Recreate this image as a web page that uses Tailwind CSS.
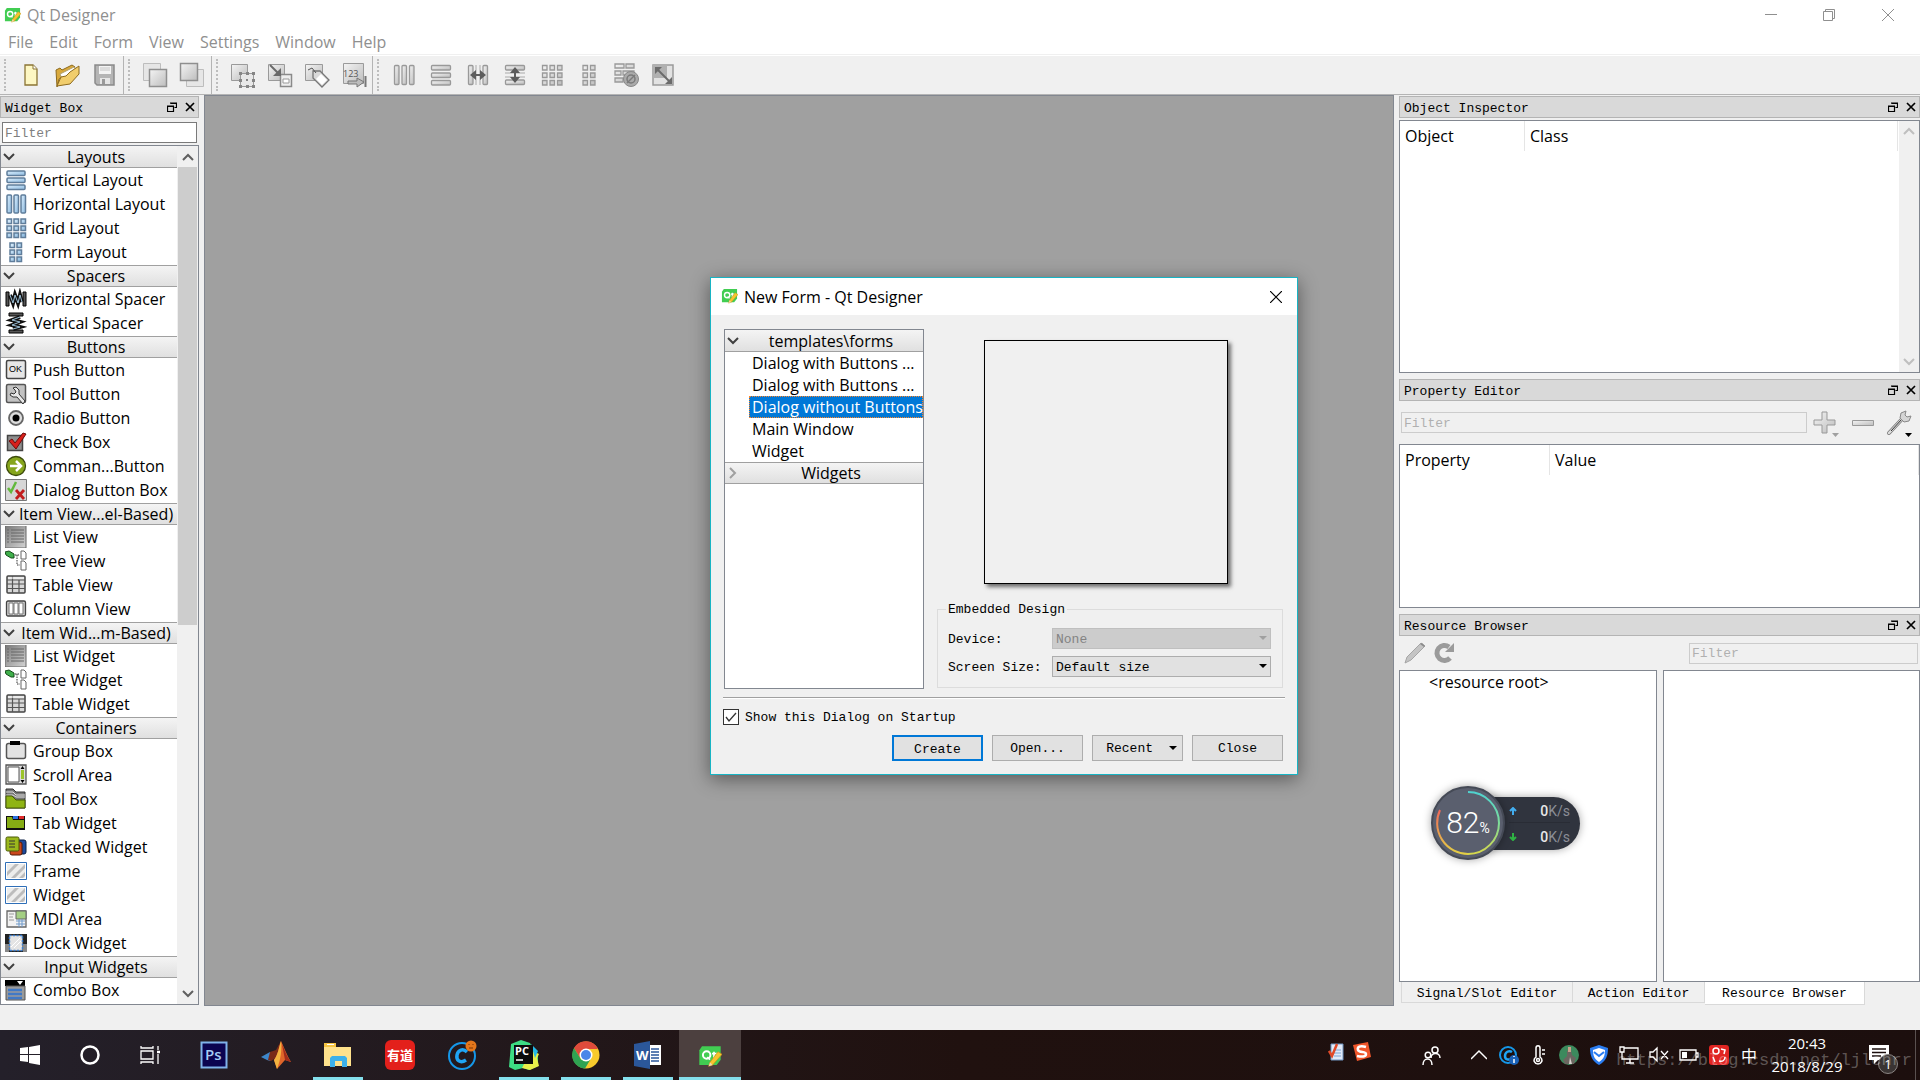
<!DOCTYPE html>
<html lang="en">
<head>
    <meta charset="UTF-8">
    <meta name="viewport" content="width=device-width, initial-scale=1.0">
    <title>Qt Designer</title>
    <!-- Tailwind CSS CDN -->
    <script src="https://cdn.jsdelivr.net/npm/@tailwindcss/browser@4"></script>
</head>
<body class="relative flex flex-col h-screen overflow-hidden bg-[#f0f0f0] text-black text-[16px] leading-[22px] font-['Open_Sans','Noto_Sans_CJK_SC',sans-serif]">

    <!-- Shared icons -->
    <svg width="0" height="0" class="absolute" aria-hidden="true">
        <defs>
            <linearGradient id="g-gray" x1="0" y1="0" x2="1" y2="1"><stop offset="0" stop-color="#f4f4f4"/><stop offset="1" stop-color="#bdbdbd"/></linearGradient>
            <linearGradient id="g-blue" x1="0" y1="0" x2="1" y2="1"><stop offset="0" stop-color="#d9ecfb"/><stop offset="1" stop-color="#8fbde2"/></linearGradient>
            <linearGradient id="g-dark" x1="0" y1="0" x2="1" y2="1"><stop offset="0" stop-color="#777"/><stop offset="1" stop-color="#d5d5d5"/></linearGradient>
            <linearGradient id="g-meter" x1="0" y1="0" x2="0" y2="1"><stop offset="0" stop-color="#4fd3d0"/><stop offset=".5" stop-color="#7ddc9a"/><stop offset="1" stop-color="#d8d84a"/></linearGradient>
            <linearGradient id="g-meter2" x1="0" y1="0" x2="0" y2="1"><stop offset="0" stop-color="#f0695a"/><stop offset="1" stop-color="#e3cf45"/></linearGradient>
        </defs>
        <symbol id="qt" viewBox="0 0 18 18">
            <path d="M3 1h14v10l-3 4H1V4z" fill="#41cd52"/>
            <circle cx="6.500" cy="7.500" r="2.800" fill="none" stroke="#fff" stroke-width="1.500"/>
            <path d="M7 9l2 2M12 5v5M10.500 6.500h4" stroke="#fff" stroke-width="1.300"/>
            <path d="M15 5l3 2-7 8-3 1 1-3z" fill="#f6c52e" stroke="#c88d14" stroke-width=".5"/>
            <path d="M8 16l1-3 2 2z" fill="#ecd9b0"/>
        </symbol>
        <symbol id="down" viewBox="0 0 12 12"><path d="M1 3l5 5 5-5" fill="none" stroke="currentColor" stroke-width="2"/></symbol>
        <symbol id="float" viewBox="0 0 10 10"><path d="M3.500 1.500h6v4h-2M3 1h7M.5 4.500h6v5h-6zM0 4h7" fill="none" stroke="#000" stroke-width="1.200"/></symbol>
        <symbol id="cross" viewBox="0 0 10 10"><path d="M1 1l8 8M9 1l-8 8" stroke="#000" stroke-width="1.700"/></symbol>
        <symbol id="w-rows" viewBox="0 0 22 22"><g fill="url(#g-blue)" stroke="#5f7d9b" stroke-width="1.500"><rect x="2" y="2" width="18" height="4.500" rx="1"/><rect x="2" y="9" width="18" height="4.500" rx="1"/><rect x="2" y="16" width="18" height="4.500" rx="1"/></g></symbol>
        <symbol id="w-cols" viewBox="0 0 22 22"><g fill="url(#g-blue)" stroke="#5f7d9b" stroke-width="1.500"><rect x="2" y="2" width="4.500" height="18" rx="1"/><rect x="9" y="2" width="4.500" height="18" rx="1"/><rect x="16" y="2" width="4.500" height="18" rx="1"/></g></symbol>
        <symbol id="w-grid" viewBox="0 0 22 22"><g fill="url(#g-blue)" stroke="#5f7d9b" stroke-width="1.500"><path d="M2 2h4.500v4.500H2zM9 2h4.500v4.500H9zM16 2h4.500v4.500H16zM2 9h4.500v4.500H2zM9 9h4.500v4.500H9zM16 9h4.500v4.500H16zM2 16h4.500v4.500H2zM9 16h4.500v4.500H9zM16 16h4.500v4.500H16z"/></g></symbol>
        <symbol id="w-form" viewBox="0 0 22 22"><g fill="url(#g-blue)" stroke="#5f7d9b" stroke-width="1.500"><path d="M5 2h4.500v4.500H5zM12 2h4.500v4.500H12zM5 9h4.500v4.500H5zM12 9h4.500v4.500H12zM5 16h4.500v4.500H5zM12 16h4.500v4.500H12z"/></g></symbol>
        <symbol id="w-spring" viewBox="0 0 22 22"><path d="M1 4h3v14H1zM18 4h3v14h-3z" fill="#555" stroke="#000"/><path d="M5 7l3 8 2-8 3 8 2-8 2 7" fill="none" stroke="#111" stroke-width="4"/><path d="M5 7l3 8 2-8 3 8 2-8 2 7" fill="none" stroke="#9cc0d8" stroke-width="1"/></symbol>
        <symbol id="w-list" viewBox="0 0 22 22"><path d="M0 0h21v22H0z" fill="url(#g-dark)"/><path d="M0 0v22M21 0v22H0" fill="none" stroke="#666"/><path d="M2 4h2M6 4h13M2 7h2M6 7h13M2 10h2M6 10h13M2 13h2M6 13h13M2 16h2M6 16h13" stroke="#666"/></symbol>
        <symbol id="w-tree" viewBox="0 0 22 22"><path d="M0 2l4-1 5 3v4H6L1 5z" fill="#3faf4b" stroke="#154d1b"/><path d="M10 5h5M12 5v10h3" fill="none" stroke="#333" stroke-dasharray="1.500 1"/><path d="M16 1h3l2 2v6h-5zM16 11h3l2 2v7h-5z" fill="#fff" stroke="#666"/></symbol>
        <symbol id="w-table" viewBox="0 0 22 22"><rect x="2" y="2" width="18" height="17" rx="1" fill="#d8d8d8" stroke="#444" stroke-width="1.500"/><path d="M2 6h18M2 10h18M2 14.500h18M7.500 2v17M14 6v13" stroke="#555" stroke-width="1.200"/><path d="M3 4h16" stroke="#fff"/></symbol>
        <symbol id="w-frame" viewBox="0 0 22 22"><path d="M.5 2.500h21v17H.5z" fill="#fff" stroke="#2f6fb8"/><path d="M2 4h18v14H2z" fill="#ededec"/><path d="M2 12l8-8h4L2 16zM6 18L20 4v4L10 18zM14 18l6-6v4l-2 2z" fill="#bcbcbc"/></symbol>
    </svg>

    <!-- Title bar -->
    <header class="flex items-center h-[30px] pl-1 pr-0.5 bg-white text-[#8f8f8f]">
        <svg class="size-[17px] mr-1.5"><use href="#qt"/></svg>
        <h1>Qt Designer</h1>
        <div class="ml-auto flex">
            <button class="flex justify-center items-center w-[58px] h-[28px]" aria-label="Minimize"><svg class="size-3" viewBox="0 0 12 12"><path d="M0 5.500h12" stroke="#8f8f8f"/></svg></button>
            <button class="flex justify-center items-center w-[58px] h-[28px]" aria-label="Restore"><svg class="size-3" viewBox="0 0 12 12" fill="none" stroke="#8f8f8f"><path d="M.5 2.500h9v9h-9zM2.500 2V.5h9v9H10"/></svg></button>
            <button class="flex justify-center items-center w-[60px] h-[28px]" aria-label="Close"><svg class="size-3" viewBox="0 0 12 12"><path d="M0 0l12 12M12 0L0 12" stroke="#8f8f8f"/></svg></button>
        </div>
    </header>

    <!-- Menu bar -->
    <nav class="h-[26px] bg-white">
        <div class="flex items-center gap-4 h-[25px] pl-2 border-b border-[#f0f0f0] text-[#8f8f8f]">
            <button>File</button>
            <button>Edit</button>
            <button>Form</button>
            <button>View</button>
            <button>Settings</button>
            <button>Window</button>
            <button>Help</button>
        </div>
    </nav>

    <!-- Tool bar -->
    <div class="flex h-[39px] border-b border-[#b4b4b4]">
        <div class="flex items-center pl-1 border-r border-[#b4b4b4]">
            <span class="w-0 h-8 mr-1.5 border-l-2 border-dotted border-[#bdbdbd]"></span>
            <button class="flex justify-center w-[37px]" aria-label="New"><svg class="size-[26px]" viewBox="0 0 26 26"><path d="M7 3h8l4 4v16H7z" fill="#fdf7c3" stroke="#8a7434" stroke-width="1.300"/><path d="M15 3v4h4" fill="#fff" stroke="#8a7434"/></svg></button>
            <button class="flex justify-center w-[37px]" aria-label="Open"><svg class="size-[26px]" viewBox="0 0 26 26"><path d="M1 8l4-2 2 2 10-5 3 2-3 5-13 7-2 8z" fill="#d9a93c" stroke="#8d6a1e"/><path d="M5 12L19 5l2 3-14 9z" fill="#fff" stroke="#b0a070"/><path d="M2 24l4-9 5-1 4-4 9-6v8l-9 10z" fill="#f1cd6c" stroke="#8d6a1e"/></svg></button>
            <button class="flex justify-center w-[37px]" aria-label="Save"><svg class="size-[26px]" viewBox="0 0 26 26"><path d="M3 3h19v20H5l-2-2z" fill="#b5b5b5" stroke="#8b8b8b" stroke-width="1.500"/><path d="M7 4h12v8H7z" fill="#f3f3f3"/><path d="M8 6h10M8 8h10" stroke="#c5c5c5"/><path d="M8 16h10v6H8z" fill="#e6e6e6"/><path d="M10 17h3v5h-3z" fill="#9a9a9a"/></svg></button>
        </div>
        <div class="flex items-center pl-1 pr-px border-r border-[#b4b4b4]">
            <span class="w-0 h-8 mr-1.5 border-l-2 border-dotted border-[#bdbdbd]"></span>
            <button class="flex justify-center w-[37px]" aria-label="Send to back"><svg class="size-[26px]" viewBox="0 0 26 26"><path d="M1.500 1.500h17v17h-17z" fill="#e6e6e6" stroke="#bdbdbd"/><path d="M7.500 7.500h17v17h-17z" fill="url(#g-gray)" stroke="#8f8f8f" stroke-width="1.500"/></svg></button>
            <button class="flex justify-center w-[37px]" aria-label="Bring to front"><svg class="size-[26px]" viewBox="0 0 26 26"><path d="M7.500 7.500h17v17h-17z" fill="#e6e6e6" stroke="#bdbdbd"/><path d="M1.500 1.500h17v17h-17z" fill="url(#g-gray)" stroke="#8f8f8f" stroke-width="1.500"/></svg></button>
        </div>
        <div class="flex items-center pl-1 border-r border-[#b4b4b4]">
            <span class="w-0 h-8 mr-1.5 border-l-2 border-dotted border-[#bdbdbd]"></span>
            <button class="flex justify-center w-[37px]" aria-label="Edit widgets"><svg class="size-[26px]" viewBox="0 0 26 26"><path d="M1.500 2.500h16v16h-16z" fill="url(#g-gray)" stroke="#9a9a9a"/><path d="M10.500 11.500h13v13h-13z" fill="#e8e8e8" stroke="#9a9a9a"/><path d="M9 10h3v3H9zM16 10h3v3h-3zM22 10h3v3h-3zM9 17h3v3H9zM22 17h3v3h-3zM9 23h3v3H9zM16 23h3v3h-3zM22 23h3v3h-3zM16 17h2v2h-2z" fill="#858585"/></svg></button>
            <button class="flex justify-center w-[37px]" aria-label="Edit signals and slots"><svg class="size-[26px]" viewBox="0 0 26 26"><path d="M1.500 2.500h16v16h-16z" fill="url(#g-gray)" stroke="#9a9a9a"/><path d="M13.500 12.500h11v12h-11z" fill="#eee" stroke="#8a8a8a" stroke-width="1.500"/><path d="M16 17h6v4h-6z" fill="#fff" stroke="#9a9a9a"/><path d="M3 3l9 9" stroke="#6a6a6a" stroke-width="2"/><path d="M14 6v8H6z" fill="#6a6a6a"/></svg></button>
            <button class="flex justify-center w-[37px]" aria-label="Edit buddies"><svg class="size-[26px]" viewBox="0 0 26 26"><path d="M1.500 2.500h17v16h-17z" fill="url(#g-gray)" stroke="#9a9a9a"/><path d="M9 9l7 0 9 9-7 7-9-9z" fill="#d9d9d9" stroke="#777" stroke-width="1.300"/><path d="M17 12l6 6-5 5-6-6z" fill="#fff"/><path d="M4 8l4-2 4 5" fill="none" stroke="#555"/></svg></button>
            <button class="flex justify-center w-[37px]" aria-label="Edit tab order"><svg class="size-[26px]" viewBox="0 0 26 26"><path d="M2.500 1.500h20v20h-20z" fill="url(#g-gray)" stroke="#9a9a9a"/><text x="2" y="15" font-size="9" fill="#555" font-family="Open Sans">123</text><path d="M7 19h9v-3l7 4-7 5v-3H7z" fill="#bcbcbc" stroke="#777"/><path d="M24.500 14v11" stroke="#777" stroke-width="2"/></svg></button>
        </div>
        <div class="flex items-center pl-1">
            <span class="w-0 h-8 mr-1.5 border-l-2 border-dotted border-[#bdbdbd]"></span>
            <button class="flex justify-center w-[37px]" aria-label="Lay out horizontally"><svg class="size-[22px]" viewBox="0 0 22 22" fill="url(#g-gray)" stroke="#999" stroke-width="1.300"><rect x="1.500" y="1.500" width="4.500" height="19" rx="1"/><rect x="9" y="1.500" width="4.500" height="19" rx="1"/><rect x="16.500" y="1.500" width="4.500" height="19" rx="1"/></svg></button>
            <button class="flex justify-center w-[37px]" aria-label="Lay out vertically"><svg class="size-[22px]" viewBox="0 0 22 22" fill="url(#g-gray)" stroke="#999" stroke-width="1.300"><rect x="1.500" y="1.500" width="19" height="4.500" rx="1"/><rect x="1.500" y="9" width="19" height="4.500" rx="1"/><rect x="1.500" y="16.500" width="19" height="4.500" rx="1"/></svg></button>
            <button class="flex justify-center w-[37px]" aria-label="Horizontal splitter"><svg class="size-[22px]" viewBox="0 0 22 22"><g fill="url(#g-gray)" stroke="#999" stroke-width="1.300"><rect x="1.500" y="1.500" width="4.500" height="19" rx="1"/><rect x="16" y="1.500" width="4.500" height="19" rx="1"/></g><path d="M9 1v20M13 1v20" stroke="#aaa"/><path d="M3 11l6-5v4h4V6l6 5-6 5v-4H9v4z" fill="#5c5c5c"/></svg></button>
            <button class="flex justify-center w-[37px]" aria-label="Vertical splitter"><svg class="size-[22px]" viewBox="0 0 22 22"><g fill="url(#g-gray)" stroke="#999" stroke-width="1.300"><rect x="1.500" y="1.500" width="19" height="4.500" rx="1"/><rect x="1.500" y="16" width="19" height="4.500" rx="1"/></g><path d="M1 9h20M1 13h20" stroke="#aaa"/><path d="M11 3l5 6h-4v4h4l-5 6-5-6h4V9H6z" fill="#5c5c5c"/></svg></button>
            <button class="flex justify-center w-[37px]" aria-label="Grid layout"><svg class="size-[22px]" viewBox="0 0 22 22" fill="url(#g-gray)" stroke="#999" stroke-width="1.300"><path d="M1.500 1.500H6V6H1.500zM9 1.500h4.500V6H9zM16.500 1.500H21V6h-4.500zM1.500 9H6v4.500H1.500zM9 9h4.500v4.500H9zM16.500 9H21v4.500h-4.500zM1.500 16.500H6V21H1.500zM9 16.500h4.500V21H9zM16.500 16.500H21V21h-4.500z"/></svg></button>
            <button class="flex justify-center w-[37px]" aria-label="Form layout"><svg class="size-[22px]" viewBox="0 0 22 22" fill="url(#g-gray)" stroke="#999" stroke-width="1.300"><path d="M5 1.500h4.500V6H5zM12.500 1.500H17V6h-4.500zM5 9h4.500v4.500H5zM12.500 9H17v4.500h-4.500zM5 16.500h4.500V21H5zM12.500 16.500H17V21h-4.500z"/></svg></button>
            <button class="flex justify-center w-[37px]" aria-label="Break layout"><svg class="size-[26px]" viewBox="0 0 26 26"><path d="M2 2h9v4H2zM13 2h8v4h-8zM2 9h6v4H2zM10 9h11v4H10zM2 16h8v4H2z" fill="url(#g-gray)" stroke="#999" stroke-width="1.300"/><circle cx="18" cy="17" r="7.500" fill="#aaa" stroke="#888"/><circle cx="18" cy="17" r="4" fill="none" stroke="#7a7a7a" stroke-width="1.500"/><path d="M14 21l8-8" stroke="#7a7a7a" stroke-width="1.500"/></svg></button>
            <button class="flex justify-center w-[37px]" aria-label="Adjust size"><svg class="size-[26px]" viewBox="0 0 26 26"><path d="M3 3h20v20H3z" fill="#e2e2e2" stroke="#9a9a9a" stroke-width="1.500"/><path d="M3 3h14v13H3z" fill="#b0b0b0"/><path d="M8 8l11 11" stroke="#6b6b6b" stroke-width="2"/><path d="M5 5h7l-7 7zM22 22h-7l7-7z" fill="#6b6b6b"/></svg></button>
        </div>
    </div>

    <!-- Work area -->
    <main class="flex flex-1 min-h-0">

        <!-- Widget Box -->
        <aside class="flex flex-col w-[204px] pr-[5px] pt-px pb-px">
            <div class="flex items-center h-[22px] shrink-0 pl-1 pr-[3px] gap-2 border border-[#b4b4b4] bg-[#d9d9d9] text-[13px] font-['Liberation_Mono',monospace]">
                <h2 class="mr-auto pt-[3px]">Widget Box</h2>
                <button aria-label="Float"><svg class="size-2.5"><use href="#float"/></svg></button>
                <button aria-label="Close dock"><svg class="size-2.5"><use href="#cross"/></svg></button>
            </div>
            <input type="text" placeholder="Filter" aria-label="Filter widgets" class="h-[21px] shrink-0 mt-1 mx-0.5 px-0.5 pt-0.5 border border-[#7a7a7a] bg-white text-[13px] font-['Liberation_Mono',monospace] placeholder:text-[#7f7f7f] outline-none">
            <div class="flex flex-1 min-h-0 mt-0.5 border border-[#828790] bg-white">
                <div class="flex-1 min-w-0 overflow-hidden whitespace-nowrap [&_li]:pb-0.5">

                    <h3 class="flex items-center h-[22px] mb-px pl-0.5 border-b border-[#a0a0a0] bg-linear-to-b from-[#f4f4f4] to-[#e0e0e0]"><svg class="size-3 text-[#404040]"><use href="#down"/></svg><span class="flex-1 text-center">Layouts</span></h3>
                    <ul>
                        <li class="flex items-center h-6 gap-1.5 pl-1"><svg class="size-[22px]"><use href="#w-rows"/></svg>Vertical Layout</li>
                        <li class="flex items-center h-6 gap-1.5 pl-1"><svg class="size-[22px]"><use href="#w-cols"/></svg>Horizontal Layout</li>
                        <li class="flex items-center h-6 gap-1.5 pl-1"><svg class="size-[22px]"><use href="#w-grid"/></svg>Grid Layout</li>
                        <li class="flex items-center h-6 gap-1.5 pl-1"><svg class="size-[22px]"><use href="#w-form"/></svg>Form Layout</li>
                    </ul>

                    <h3 class="flex items-center h-[22px] mb-px pl-0.5 border-y border-[#a0a0a0] bg-linear-to-b from-[#f4f4f4] to-[#e0e0e0]"><svg class="size-3 text-[#404040]"><use href="#down"/></svg><span class="flex-1 text-center">Spacers</span></h3>
                    <ul>
                        <li class="flex items-center h-6 gap-1.5 pl-1"><svg class="size-[22px]"><use href="#w-spring"/></svg>Horizontal Spacer</li>
                        <li class="flex items-center h-6 gap-1.5 pl-1"><svg class="size-[22px] rotate-90"><use href="#w-spring"/></svg>Vertical Spacer</li>
                    </ul>

                    <h3 class="flex items-center h-[22px] mb-px pl-0.5 border-y border-[#a0a0a0] bg-linear-to-b from-[#f4f4f4] to-[#e0e0e0]"><svg class="size-3 text-[#404040]"><use href="#down"/></svg><span class="flex-1 text-center">Buttons</span></h3>
                    <ul>
                        <li class="flex items-center h-6 gap-1.5 pl-1"><svg class="size-[22px]" viewBox="0 0 22 22"><rect x="1.500" y="1.500" width="19" height="18" rx="1.500" fill="#e6e6e6" stroke="#444" stroke-width="1.500"/><text x="4" y="13" font-size="9" font-family="Liberation Sans">OK</text></svg>Push Button</li>
                        <li class="flex items-center h-6 gap-1.5 pl-1"><svg class="size-[22px]" viewBox="0 0 22 22"><rect x="1.500" y="1.500" width="19" height="18" rx="1.500" fill="#c2c2c2" stroke="#555" stroke-width="1.500"/><path d="M8 5l3-1 3 3v4l6 7-2 3-6-7H8l-3-2 1-2 3 1 2-2-1-2z" fill="#e8e8e8" stroke="#333"/></svg>Tool Button</li>
                        <li class="flex items-center h-6 gap-1.5 pl-1"><svg class="size-[22px]" viewBox="0 0 22 22"><circle cx="11" cy="11" r="7" fill="#ddd" stroke="#666" stroke-width="1.800"/><circle cx="11" cy="11" r="3.500"/></svg>Radio Button</li>
                        <li class="flex items-center h-6 gap-1.5 pl-1"><svg class="size-[22px]" viewBox="0 0 22 22"><path d="M2.500 4.500h15v15h-15z" fill="#8e8e8e" stroke="#444" stroke-width="1.500"/><path d="M4 10l3-2 3 4 8-10 3 1-10 15z" fill="#d8201c" stroke="#6e0b0b"/></svg>Check Box</li>
                        <li class="flex items-center h-6 gap-1.5 pl-1"><svg class="size-[22px]" viewBox="0 0 22 22"><circle cx="11" cy="11" r="9.500" fill="#86a51c" stroke="#3c4b0c" stroke-width="1.300"/><path d="M5 11h11M11 6l5 5-5 5" fill="none" stroke="#fff" stroke-width="2.500"/></svg>Comman...Button</li>
                        <li class="flex items-center h-6 gap-1.5 pl-1"><svg class="size-[22px]" viewBox="0 0 22 22"><path d="M.5.5h21v21H.5z" fill="#d6d6d6" stroke="#777"/><path d="M3 9l3 4 5-10" fill="none" stroke="#63b93c" stroke-width="2.500"/><path d="M11 11l8 9M19 11l-8 9" stroke="#c21d1d" stroke-width="2.800"/></svg>Dialog Button Box</li>
                    </ul>

                    <h3 class="flex items-center h-[22px] mb-px pl-0.5 border-y border-[#a0a0a0] bg-linear-to-b from-[#f4f4f4] to-[#e0e0e0]"><svg class="size-3 text-[#404040]"><use href="#down"/></svg><span class="flex-1 text-center">Item View...el-Based)</span></h3>
                    <ul>
                        <li class="flex items-center h-6 gap-1.5 pl-1"><svg class="size-[22px]"><use href="#w-list"/></svg>List View</li>
                        <li class="flex items-center h-6 gap-1.5 pl-1"><svg class="size-[22px]"><use href="#w-tree"/></svg>Tree View</li>
                        <li class="flex items-center h-6 gap-1.5 pl-1"><svg class="size-[22px]"><use href="#w-table"/></svg>Table View</li>
                        <li class="flex items-center h-6 gap-1.5 pl-1"><svg class="size-[22px]" viewBox="0 0 22 22"><rect x="1.500" y="3" width="19" height="15" rx="1.500" fill="#ccc" stroke="#444" stroke-width="1.300"/><path d="M4 5h4v11H4zM9 5h4v11H9zM14 5h4v11h-4z" fill="#fff" stroke="#777"/></svg>Column View</li>
                    </ul>

                    <h3 class="flex items-center h-[22px] mb-px pl-0.5 border-y border-[#a0a0a0] bg-linear-to-b from-[#f4f4f4] to-[#e0e0e0]"><svg class="size-3 text-[#404040]"><use href="#down"/></svg><span class="flex-1 text-center">Item Wid...m-Based)</span></h3>
                    <ul>
                        <li class="flex items-center h-6 gap-1.5 pl-1"><svg class="size-[22px]"><use href="#w-list"/></svg>List Widget</li>
                        <li class="flex items-center h-6 gap-1.5 pl-1"><svg class="size-[22px]"><use href="#w-tree"/></svg>Tree Widget</li>
                        <li class="flex items-center h-6 gap-1.5 pl-1"><svg class="size-[22px]"><use href="#w-table"/></svg>Table Widget</li>
                    </ul>

                    <h3 class="flex items-center h-[22px] mb-px pl-0.5 border-y border-[#a0a0a0] bg-linear-to-b from-[#f4f4f4] to-[#e0e0e0]"><svg class="size-3 text-[#404040]"><use href="#down"/></svg><span class="flex-1 text-center">Containers</span></h3>
                    <ul>
                        <li class="flex items-center h-6 gap-1.5 pl-1"><svg class="size-[22px]" viewBox="0 0 22 22"><rect x="1.500" y="3.500" width="19" height="15" rx="2" fill="#e2e2e2" stroke="#555" stroke-width="1.500"/><path d="M5 1h10v4H5z"/></svg>Group Box</li>
                        <li class="flex items-center h-6 gap-1.5 pl-1"><svg class="size-[22px]" viewBox="0 0 22 22"><path d="M1 1h20v19H1z" fill="#dcdcdc" stroke="#555" stroke-width="1.300"/><path d="M3 3h11v15H3z" fill="#fff" stroke="#555"/><path d="M16 6h3v9h-3z" fill="#9cc42a"/><path d="M17.500 2l2 3h-4zM17.500 19l2-3h-4z"/></svg>Scroll Area</li>
                        <li class="flex items-center h-6 gap-1.5 pl-1"><svg class="size-[22px]" viewBox="0 0 22 22"><path d="M1 1h7l3 3h9v16H1z" fill="#777" stroke="#333"/><path d="M1 4h7l3 3h9M1 7h7l3 2h9" fill="none" stroke="#ddd"/><path d="M1 8h6l4 4h9v8H1z" fill="#8fb414" stroke="#465a05"/></svg>Tool Box</li>
                        <li class="flex items-center h-6 gap-1.5 pl-1"><svg class="size-[22px]" viewBox="0 0 22 22"><path d="M1 4h19v14H1z" fill="#111"/><path d="M2 5h5l1 3h11v8H2z" fill="#86ad14"/><path d="M8 4h5v3H8z" fill="#2d6fe0"/><path d="M14 4h5v3h-5z" fill="#e02b2b"/></svg>Tab Widget</li>
                        <li class="flex items-center h-6 gap-1.5 pl-1"><svg class="size-[22px]" viewBox="0 0 22 22"><rect x="8" y="4" width="13" height="14" rx="2" fill="#1d4a9c" stroke="#0b1e44"/><rect x="5" y="6" width="12" height="13" rx="2" fill="#c9471c" stroke="#581a05"/><rect x="1" y="1" width="13" height="14" rx="1.500" fill="#9bb81c" stroke="#4a5a08"/><path d="M4 5h6M4 8h6M4 11h6" stroke="#333"/></svg>Stacked Widget</li>
                        <li class="flex items-center h-6 gap-1.5 pl-1"><svg class="size-[22px]"><use href="#w-frame"/></svg>Frame</li>
                        <li class="flex items-center h-6 gap-1.5 pl-1"><svg class="size-[22px]"><use href="#w-frame"/></svg>Widget</li>
                        <li class="flex items-center h-6 gap-1.5 pl-1"><svg class="size-[22px]" viewBox="0 0 22 22"><path d="M2 3h19v16H2z" fill="#f2f2f2" stroke="#666" stroke-width="1.300"/><path d="M11 3h10v8H11z" fill="#a4cf83" stroke="#666"/><path d="M4 6h5M4 9h4M4 12h5" stroke="#999"/><path d="M11 13h9M11 16h9M14 11v8M17 11v8" stroke="#6f9acb"/></svg>MDI Area</li>
                        <li class="flex items-center h-6 gap-1.5 pl-1"><svg class="size-[22px]" viewBox="0 0 22 22"><path d="M0 2h22v18H0z" fill="#222"/><path d="M0 12h4v8H0zM18 12h4v8h-4z" fill="#888"/><path d="M4.500 3.500h13v15h-13z" fill="#e4e4e4" stroke="#3c7fd0" stroke-width="1.500" stroke-dasharray="2 1.500"/><path d="M6 15l9-9M9 16l7-7" stroke="#fff"/></svg>Dock Widget</li>
                    </ul>

                    <h3 class="flex items-center h-[22px] mb-px pl-0.5 border-y border-[#a0a0a0] bg-linear-to-b from-[#f4f4f4] to-[#e0e0e0]"><svg class="size-3 text-[#404040]"><use href="#down"/></svg><span class="flex-1 text-center">Input Widgets</span></h3>
                    <ul>
                        <li class="flex items-center h-6 gap-1.5 pl-1"><svg class="size-[22px]" viewBox="0 0 22 22"><path d="M0 1h20v6H0z" fill="#000"/><path d="M12 2h6l-3 4z" fill="#fff"/><path d="M1 7h19v14H1z" fill="#9a9a9a" stroke="#555"/><path d="M3 11h14M3 15h14M3 19h14" stroke="#4079c6" stroke-width="2.500"/></svg>Combo Box</li>
                    </ul>
                </div>

                <!-- Scroll bar -->
                <div class="flex flex-col w-[21px] px-px bg-[#f0f0f0] text-[#606060]">
                    <button class="flex justify-center items-center h-[21px]" aria-label="Scroll up"><svg class="size-3 rotate-180"><use href="#down"/></svg></button>
                    <div class="h-[458px] bg-[#cdcdcd]"></div>
                    <button class="flex justify-center items-center h-[21px] mt-auto" aria-label="Scroll down"><svg class="size-3"><use href="#down"/></svg></button>
                </div>
            </div>
        </aside>

        <!-- Form canvas -->
        <section class="flex-1 border border-[#828790] bg-[#a0a0a0]"></section>

        <!-- Right docks -->
        <aside class="flex flex-col w-[526px] pl-[5px] pt-px">
            <div class="flex items-center h-[22px] shrink-0 pl-1 pr-[3px] gap-2 border border-[#b4b4b4] bg-[#d9d9d9] text-[13px] font-['Liberation_Mono',monospace]">
                <h2 class="mr-auto pt-[3px]">Object Inspector</h2>
                <button aria-label="Float"><svg class="size-2.5"><use href="#float"/></svg></button>
                <button aria-label="Close dock"><svg class="size-2.5"><use href="#cross"/></svg></button>
            </div>
            <div class="flex h-[253px] shrink-0 mt-0.5 border border-[#828790] bg-white">
                <table class="block flex-1 text-left">
                    <thead class="block">
                        <tr class="flex h-[30px]">
                            <th class="w-[125px] pl-[5px] pt-1 border-r border-[#e5e5e5] font-normal">Object</th>
                            <th class="flex-1 pl-[5px] pt-1 mr-px border-r border-[#e5e5e5] font-normal">Class</th>
                        </tr>
                    </thead>
                </table>
                <div class="flex flex-col justify-between items-center w-5 py-1 bg-[#f0f0f0] text-[#bfbfbf]">
                    <svg class="size-3 rotate-180"><use href="#down"/></svg>
                    <svg class="size-3"><use href="#down"/></svg>
                </div>
            </div>

            <div class="flex items-center h-[22px] shrink-0 mt-1.5 pl-1 pr-[3px] gap-2 border border-[#b4b4b4] bg-[#d9d9d9] text-[13px] font-['Liberation_Mono',monospace]">
                <h2 class="mr-auto pt-[3px]">Property Editor</h2>
                <button aria-label="Float"><svg class="size-2.5"><use href="#float"/></svg></button>
                <button aria-label="Close dock"><svg class="size-2.5"><use href="#cross"/></svg></button>
            </div>
            <div class="flex items-center h-[43px] shrink-0 pl-0.5 pr-1">
                <input type="text" placeholder="Filter" aria-label="Filter properties" disabled class="flex-1 h-[21px] px-0.5 pt-0.5 border border-[#ccc] bg-[#f0f0f0] text-[13px] font-['Liberation_Mono',monospace] placeholder:text-[#b0b0b0]">
                <button class="flex justify-center w-[37px]" aria-label="Add property"><svg class="size-7" viewBox="0 0 28 28"><path d="M10 3h5v8h8v5h-8v8h-5v-8H2v-5h8z" fill="url(#g-gray)" stroke="#999"/><path d="M20 24h7l-3.500 4z" fill="#a0a0a0"/></svg></button>
                <button class="flex justify-center w-[37px]" aria-label="Remove property"><svg class="size-[22px]" viewBox="0 0 22 22"><path d="M.5 8.500h21v5H.5z" fill="url(#g-gray)" stroke="#999"/></svg></button>
                <button class="flex justify-center w-[35px]" aria-label="Configure"><svg class="size-7" viewBox="0 0 28 28"><path d="M4 24L18 9" stroke="#777" stroke-width="4" stroke-linecap="round"/><path d="M4 24L18 9" stroke="#dcdcdc" stroke-width="2.500" stroke-linecap="round"/><path d="M6 22L17 10" stroke="#333"/><path d="M15 9l1-5 5-2-1 4 2 2 4-1-2 5-5 1z" fill="#d5d5d5" stroke="#888"/><path d="M20 24h7l-3.500 4z"/></svg></button>
            </div>
            <div class="h-[164px] shrink-0 border border-[#828790] bg-white">
                <table class="block text-left">
                    <thead class="block">
                        <tr class="flex h-[30px]">
                            <th class="w-[150px] pl-[5px] pt-1 border-r border-[#e5e5e5] font-normal">Property</th>
                            <th class="flex-1 pl-[5px] pt-1 border-r border-[#e5e5e5] font-normal">Value</th>
                        </tr>
                    </thead>
                </table>
            </div>

            <div class="flex items-center h-[22px] shrink-0 mt-1.5 pl-1 pr-[3px] gap-2 border border-[#b4b4b4] bg-[#d9d9d9] text-[13px] font-['Liberation_Mono',monospace]">
                <h2 class="mr-auto pt-[3px]">Resource Browser</h2>
                <button aria-label="Float"><svg class="size-2.5"><use href="#float"/></svg></button>
                <button aria-label="Close dock"><svg class="size-2.5"><use href="#cross"/></svg></button>
            </div>
            <div class="flex items-center h-[34px] shrink-0 gap-[7px] pl-[5px] pr-0.5">
                <button aria-label="Edit resources"><svg class="size-[22px]" viewBox="0 0 22 22"><path d="M1 21l2-6L17 1l4 3L7 18z" fill="#c4c4c4" stroke="#a5a5a5"/><path d="M16 2l4 3 1-1-3-3z" fill="#8b8b8b"/></svg></button>
                <button aria-label="Reload"><svg class="size-[22px]" viewBox="0 0 22 22"><path d="M17 16a7.500 7.500 0 1 1-1-11" fill="none" stroke="#9b9b9b" stroke-width="5"/><path d="M12 10h9V1z" fill="#9b9b9b"/></svg></button>
                <input type="text" placeholder="Filter" aria-label="Filter resources" disabled class="ml-auto w-[229px] h-[21px] px-0.5 pt-0.5 border border-[#ccc] bg-[#f0f0f0] text-[13px] font-['Liberation_Mono',monospace] placeholder:text-[#b0b0b0]">
            </div>
            <div class="flex flex-1 min-h-0 gap-1.5">
                <div class="w-1/2 pl-[29px] border border-[#828790] bg-white">&lt;resource root&gt;</div>
                <div class="w-1/2 border border-[#828790] bg-white"></div>
            </div>
            <div class="flex items-start h-6 shrink-0 pl-0.5 text-[13px] leading-5 font-['Liberation_Mono',monospace]">
                <button class="w-[172px] h-[21px] pt-0.5 border border-t-0 border-[#d9d9d9]">Signal/Slot Editor</button>
                <button class="w-[132px] h-[21px] pt-0.5 border border-t-0 border-l-0 border-[#d9d9d9]">Action Editor</button>
                <button class="w-[160px] h-[23px] pt-0.5 border border-t-0 border-l-0 border-[#d9d9d9] bg-white">Resource Browser</button>
            </div>
        </aside>
    </main>

    <!-- Status bar -->
    <div class="h-6 shrink-0"></div>

    <!-- New Form dialog -->
    <section role="dialog" aria-label="New Form" class="absolute left-[710px] top-[277px] w-[588px] border border-[#18b4c4] bg-[#f0f0f0] shadow-[0_4px_18px_rgba(0,0,0,0.45)]">
        <div class="flex items-center h-[37px] pl-[10px] pr-[15px] bg-white">
            <svg class="size-[17px] mr-1.5"><use href="#qt"/></svg>
            <h2>New Form - Qt Designer</h2>
            <button class="ml-auto" aria-label="Close dialog"><svg class="size-3" viewBox="0 0 12 12"><path d="M0 0l12 12M12 0L0 12" stroke="#000" stroke-width="1.200"/></svg></button>
        </div>
        <div class="flex gap-[13px] pl-[13px] pr-[14px] pt-[14px]">
            <div class="w-[200px] h-[360px] border border-[#828790] bg-white whitespace-nowrap">
                <h3 class="flex items-center h-[22px] pl-0.5 border-b border-[#a0a0a0] bg-linear-to-b from-[#f4f4f4] to-[#e0e0e0]"><svg class="size-3 text-[#404040]"><use href="#down"/></svg><span class="flex-1 text-center">templates\forms</span></h3>
                <ul class="pl-6">
                    <li class="h-[22px] pl-[3px]">Dialog with Buttons ...</li>
                    <li class="h-[22px] pl-[3px]">Dialog with Buttons ...</li>
                    <li class="h-[22px] pl-0.5 border border-dotted border-[#ff8728] bg-[#0078d7] text-white leading-5">Dialog without Buttons</li>
                    <li class="h-[22px] pl-[3px]">Main Window</li>
                    <li class="h-[22px] pl-[3px]">Widget</li>
                </ul>
                <h3 class="flex items-center h-[22px] pl-0.5 border-y border-[#a0a0a0] bg-linear-to-b from-[#f4f4f4] to-[#e0e0e0]"><svg class="size-3 -rotate-90 text-[#a0a0a0]"><use href="#down"/></svg><span class="flex-1 text-center">Widgets</span></h3>
            </div>
            <div class="flex flex-col flex-1 text-[13px] font-['Liberation_Mono',monospace]">
                <div class="size-[244px] mt-[11px] ml-[47px] border border-black shadow-[3px_3px_4px_rgba(0,0,0,0.55)]"></div>
                <fieldset class="mt-[13px] h-[91px] px-[10px] border border-[#dcdcdc]">
                    <legend class="px-0.5 -ml-0.5 pt-0.5">Embedded Design</legend>
                    <div class="grid grid-cols-[104px_1fr] items-center gap-y-[7px] mt-[7px] pr-px">
                        <label for="device" class="pt-0.5 leading-[19px]">Device:</label>
                        <div class="relative flex">
                            <select id="device" disabled class="appearance-none w-full h-[21px] pl-[3px] pt-px leading-[19px] border border-[#bfbfbf] bg-[#ccc] text-[#838383] opacity-100"><option>None</option></select>
                            <svg class="absolute right-1 top-2 w-2 h-1" viewBox="0 0 8 4"><path d="M0 0h8L4 4z" fill="#a0a0a0"/></svg>
                        </div>
                        <label for="screen" class="pt-0.5 leading-[19px]">Screen Size:</label>
                        <div class="relative flex">
                            <select id="screen" class="appearance-none w-full h-[21px] pl-[3px] pt-px leading-[19px] border border-[#adadad] bg-[#e1e1e1]"><option>Default size</option></select>
                            <svg class="absolute right-1 top-2 w-2 h-1" viewBox="0 0 8 4"><path d="M0 0h8L4 4z"/></svg>
                        </div>
                    </div>
                </fieldset>
            </div>
        </div>
        <div class="mx-3 mt-2 border-t border-[#a0a0a0] border-b border-b-white"></div>
        <div class="px-3 pb-[13px] text-[13px] font-['Liberation_Mono',monospace]">
            <div class="flex items-center h-6 mt-1.5">
                <span class="relative flex mr-1.5">
                    <input id="startup" type="checkbox" checked class="appearance-none size-4 border border-[#333] bg-white">
                    <svg class="absolute inset-0 size-4 pointer-events-none" viewBox="0 0 16 16"><path d="M3 8l3 4 7-8" fill="none" stroke="#333" stroke-width="1.300"/></svg>
                </span>
                <label for="startup" class="pt-0.5">Show this Dialog on Startup</label>
            </div>
            <div class="flex justify-end gap-[9px] mt-1.5 pr-0.5">
                <button class="w-[91px] h-[26px] pt-0.5 border-2 border-[#0078d7] bg-[#e1e1e1]">Create</button>
                <button class="w-[91px] h-[26px] pt-0.5 border border-[#adadad] bg-[#e1e1e1]">Open...</button>
                <button class="flex justify-end items-center gap-4 w-[91px] h-[26px] pr-[5px] border border-[#adadad] bg-[#e1e1e1]"><span class="pt-0.5">Recent</span><svg class="w-2 h-1" viewBox="0 0 8 4"><path d="M0 0h8L4 4z"/></svg></button>
                <button class="w-[91px] h-[26px] pt-0.5 border border-[#adadad] bg-[#e1e1e1]">Close</button>
            </div>
        </div>
    </section>

    <!-- Floating network monitor -->
    <section class="absolute right-[340px] top-[786px] flex items-center font-[Roboto,sans-serif]" aria-label="Network monitor">
        <div class="relative z-10 flex justify-center items-center size-[74px] rounded-full border-2 border-[#454a56] bg-[#5a5f6e] text-white shadow-[0_0_8px_rgba(0,0,0,0.35)]">
            <svg class="absolute inset-0 size-[70px]" viewBox="0 0 70 70" fill="none" stroke-width="2"><path d="M35 4a31 31 0 0 1 0 62" stroke="url(#g-meter)"/><path d="M35 66A31 31 0 0 1 7 22" stroke="url(#g-meter2)"/></svg>
            <span class="text-[30px] leading-8 font-light">82</span><span class="text-[14px] mt-2.5">%</span>
        </div>
        <div class="-ml-5 w-[95px] h-[53px] pl-6 pr-[10px] rounded-r-full bg-[#30343e] shadow-[0_0_8px_rgba(0,0,0,0.35)]">
            <p class="flex items-center h-[26px] pt-[3px] text-[14px] text-[#8b8e96] border-b border-[#292c35]"><svg class="size-2 mr-auto" viewBox="0 0 8 8"><path d="M4 8V1M1 4l3-3 3 3" fill="none" stroke="#43aef0" stroke-width="2"/></svg><b class="text-[#e8e8e8] font-medium">0</b>K/s</p>
            <p class="flex items-center h-[26px] pt-[3px] text-[14px] text-[#8b8e96]"><svg class="size-2 mr-auto" viewBox="0 0 8 8"><path d="M4 0v7M1 4l3 3 3-3" fill="none" stroke="#2fb344" stroke-width="2"/></svg><b class="text-[#e8e8e8] font-medium">0</b>K/s</p>
        </div>
    </section>

    <!-- Taskbar -->
    <footer class="relative flex h-[50px] shrink-0 text-white bg-linear-to-r from-[#24202a] via-[#20110f] to-[#1c0f0e]">
        <button class="flex justify-center items-center w-[60px]" aria-label="Start"><svg class="size-5" viewBox="0 0 20 20" fill="#fff"><path d="M0 3l8-1v7H0zM9 2l11-2v9H9zM0 10h8v7l-8-1zM9 10h11v10L9 18z"/></svg></button>
        <button class="flex justify-center items-center w-[60px]" aria-label="Cortana"><svg class="size-5" viewBox="0 0 20 20"><circle cx="10" cy="10" r="8.500" fill="none" stroke="#fff" stroke-width="2.500"/></svg></button>
        <button class="flex justify-center items-center w-[60px]" aria-label="Task view"><svg class="size-5" viewBox="0 0 20 20" fill="none" stroke="#fff" stroke-width="1.300"><path d="M1 6h12v8H1zM1 1v2h12V1M1 19v-2h12v2M18 1v4M18 9v10"/><path d="M17 7h3" stroke-width="2.500"/></svg></button>
        <button class="flex justify-center items-center w-[62px] ml-[3px]" aria-label="Photoshop"><svg class="size-7" viewBox="0 0 28 28"><path d="M1.500 1.500h25v25h-25z" fill="#0b0450" stroke="#7fb2ea" stroke-width="2"/><text x="5" y="19" font-size="15" font-weight="600" fill="#a5cdf5" font-family="Open Sans">Ps</text></svg></button>
        <button class="flex justify-center items-center w-[62px]" aria-label="MATLAB"><svg class="size-[30px]" viewBox="0 0 30 30"><path d="M0 17l9-5 6 4-6 5-3-1z" fill="#3d86c9"/><path d="M9 12l6-2 5-9-2 15-8 5-3-1z" fill="#7a2a18"/><path d="M20 1c3 6 6 15 10 21l-6-2-8 9-3-9c4-5 5-13 7-19z" fill="#e0662a"/><path d="M20 1c1 8 0 18-4 28l-3-9c4-5 5-13 7-19z" fill="#f4b340"/><path d="M21 4c3 7 5 13 9 18l-6-2z" fill="#a12c1b"/></svg></button>
        <button class="flex justify-center items-center w-[62px] relative" aria-label="File Explorer"><svg class="size-7" viewBox="0 0 28 28"><path d="M0 2h12v4h15v19H0z" fill="#ffe28c"/><path d="M0 2h12v4H0z" fill="#f5c443"/><path d="M3 3h7v1H3z" fill="#fff"/><path d="M6 25v-8l2-2h13l2 2v9h-5v-6h-7v6H6z" fill="#3db1ea"/></svg><span class="absolute bottom-0 inset-x-1.5 h-[3px] bg-[#84dfec]"></span></button>
        <button class="flex justify-center items-center w-[62px]" aria-label="Youdao"><span class="flex justify-center items-center size-[30px] rounded-md bg-[#e3201b] text-[13px] font-bold font-['Noto_Sans_CJK_SC',sans-serif]">有道</span></button>
        <button class="flex justify-center items-center w-[62px]" aria-label="Cloud client"><svg class="size-[30px]" viewBox="0 0 30 30"><circle cx="15" cy="16" r="13" fill="none" stroke="#1597e8" stroke-width="2"/><path d="M20 12c-4-4-9-2-10 3s3 9 9 5" fill="none" stroke="#1fa5f5" stroke-width="3.500"/><circle cx="24" cy="6" r="5.500" fill="#e3761b"/><path d="M22 4v1M26 4v1M22 8h4" stroke="#7a3505"/></svg></button>
        <button class="flex justify-center items-center w-[62px] relative" aria-label="PyCharm"><svg class="size-[30px]" viewBox="0 0 30 30"><path d="M2 4l10-4 9 3 4 8 4 4v11l-9 4-6-2-8 2-6-3z" fill="#3ddc84"/><path d="M22 10l8 4-2 4 2 8-9 4-8-2z" fill="#e8f04a"/><path d="M22 4l7 7-3 7z" fill="#23b9e8"/><path d="M5 5h19v19H5z" fill="#0c0c0c"/><text x="6" y="15" font-size="11" font-weight="700" fill="#fff" font-family="Open Sans">PC</text><path d="M7 20h7" stroke="#fff" stroke-width="1.500"/></svg><span class="absolute bottom-0 inset-x-1.5 h-[3px] bg-[#84dfec]"></span></button>
        <button class="flex justify-center items-center w-[62px] relative" aria-label="Chrome"><svg class="size-7" viewBox="0 0 28 28"><circle cx="14" cy="14" r="13.500" fill="#f8ca2c"/><path d="M2 7a13.500 13.500 0 0 1 24 1H14l-6 9z" fill="#df4b3b"/><path d="M2 7a13.500 13.500 0 0 0 11 20.500l6-10-10 1z" fill="#2fa352"/><circle cx="14" cy="14" r="6.500" fill="#fff"/><circle cx="14" cy="14" r="5" fill="#4a86e8"/></svg><span class="absolute bottom-0 inset-x-1.5 h-[3px] bg-[#84dfec]"></span></button>
        <button class="flex justify-center items-center w-[62px] relative" aria-label="Word"><svg class="size-7" viewBox="0 0 28 28"><path d="M15 4h12v20H15z" fill="#fff"/><path d="M17 8h8M17 11h8M17 14h8M17 17h8M17 20h8" stroke="#2b579a" stroke-width="1.500"/><path d="M0 3l16-3v28L0 25z" fill="#2b579a"/><text x="2" y="19" font-size="13" font-weight="700" fill="#fff" font-family="Open Sans">W</text></svg><span class="absolute bottom-0 inset-x-1.5 h-[3px] bg-[#84dfec]"></span></button>
        <button class="flex justify-center items-center w-[62px] relative bg-[#4c403f]" aria-label="Qt Designer"><svg class="size-6 mt-1"><use href="#qt"/></svg><span class="absolute bottom-0 inset-x-0 h-[3px] bg-[#84dfec]"></span></button>

        <!-- Tray -->
        <div class="flex items-center gap-2 ml-auto mr-[50px] pb-1.5">
            <svg class="w-4 h-[18px]" viewBox="0 0 16 18"><path d="M3 1h12v16H3z" fill="#dfeaf8" stroke="#6f93bf"/><path d="M6 7h7M6 10h7M6 13h7" stroke="#7fa4d4"/><path d="M1 8l3 5 5-12" fill="none" stroke="#e04a28" stroke-width="2.500"/></svg>
            <svg class="size-5" viewBox="0 0 20 20"><path d="M1 3l15-3 3 15-14 4z" fill="#f0562a"/><path d="M14 5c-6-2-9 0-8 3s8 1 8 4-4 3-9 2" fill="none" stroke="#fff" stroke-width="2.500"/></svg>
        </div>
        <div class="flex items-center mr-[23px]"><svg class="size-[19px]" viewBox="0 0 19 19" fill="none" stroke="#fff" stroke-width="1.500"><circle cx="13" cy="4" r="3"/><path d="M9 12c0-6 9-6 9 0"/><circle cx="6" cy="9" r="2.800"/><path d="M1 19c0-8 9-8 9 0"/></svg></div>
        <div class="flex items-center">
            <span class="flex justify-center w-[30px]"><svg class="size-4" viewBox="0 0 16 16"><path d="M0 12l8-8 8 8" fill="none" stroke="#fff" stroke-width="1.500"/></svg></span>
            <span class="flex justify-center w-[30px]"><svg class="size-5" viewBox="0 0 20 20"><circle cx="9" cy="10" r="8" fill="none" stroke="#1597e8" stroke-width="2"/><path d="M13 7c-3-2-7 0-7 4s4 4 6 3" fill="none" stroke="#1fa5f5" stroke-width="2.500"/><circle cx="15" cy="15" r="5" fill="#1a62b8"/><path d="M15 14v4M15 11v1" stroke="#fff" stroke-width="1.500"/></svg></span>
            <span class="flex justify-center w-[30px]"><svg class="w-3 h-5" viewBox="0 0 12 20" fill="none" stroke="#fff" stroke-width="1.500"><path d="M3 12V3c0-3 4-3 4 0v9c4 3 1 7-2 7s-6-4-2-7z"/><circle cx="5" cy="15" r="1.500"/><path d="M9 5h3M9 9h3"/></svg></span>
            <span class="flex justify-center w-[30px]"><svg class="size-5" viewBox="0 0 20 20"><circle cx="10" cy="10" r="10" fill="#3c8a5d"/><path d="M8 6l4-1 1 5 4 3-2 6H6l-2-4 4-4z" fill="#6b6660"/><path d="M9 2h3v5H9z" fill="#c9a08b"/><path d="M11 12l2 7h-3z" fill="#d8d0cc"/></svg></span>
            <span class="flex justify-center w-[30px]"><svg class="size-5" viewBox="0 0 20 20"><path d="M10 0l9 3c0 8-2 13-9 17C3 16 1 11 1 3z" fill="#2a7cf0"/><path d="M10 3l6 2c0 5-1 9-6 12C5 14 4 10 4 5z" fill="#fff"/><path d="M5 7l5 4 5-4" fill="none" stroke="#2a7cf0" stroke-width="2"/></svg></span>
            <span class="flex justify-center w-[30px]"><svg class="size-5" viewBox="0 0 20 20" fill="none" stroke="#fff" stroke-width="1.300"><path d="M5 3h14v11H3V8M7 18h8M11 14v4M1 2h4v5H1zM3 7v3"/></svg></span>
            <span class="flex justify-center w-[30px]"><svg class="size-5" viewBox="0 0 20 20" fill="none" stroke="#fff" stroke-width="1.300"><path d="M1 7h3l4-4v13l-4-4H1zM12 6l7 8M19 6l-7 8"/></svg></span>
            <span class="flex justify-center w-[30px]"><svg class="w-5 h-3" viewBox="0 0 20 12"><path d="M1 1h16v10H1zM17 4h2v4h-2" fill="none" stroke="#fff" stroke-width="1.300"/><path d="M3 3h5v6H3z" fill="#fff"/></svg></span>
            <span class="flex justify-center w-[30px]"><svg class="size-5" viewBox="0 0 20 20"><rect width="20" height="20" rx="3" fill="#e02522"/><g fill="none" stroke="#fff" stroke-width="1.500"><circle cx="7" cy="6" r="3"/><path d="M12 4l4 1-1 4M4 12l2 5M10 16c4 1 6-1 6-4"/></g></svg></span>
            <span class="flex justify-center w-[30px] text-[16px] font-['Noto_Sans_CJK_SC',sans-serif]">中</span>
        </div>
        <div class="w-[86px] pt-0.5 text-center text-[15px] leading-[23px]"><p>20:43</p><p>2018/8/29</p></div>
        <button class="relative flex justify-center items-center w-[66px] mr-1 pr-2 border-r border-[#5a5150]" aria-label="Notifications">
            <svg class="size-5" viewBox="0 0 20 20"><path d="M0 0h20v15H9l-4 4v-4H0z" fill="#fff"/><path d="M3 4h14M3 7.500h14M3 11h9" stroke="#1c0f0e" stroke-width="1.500"/></svg>
            <span class="absolute left-7 top-6 flex justify-center items-center size-5 rounded-full border border-[#8a8583] bg-[#3a3433] text-[13px]">1</span>
        </button>
        <p class="absolute right-2 top-5 text-[17px] text-white/30 font-['Liberation_Mono',monospace]">https://blog.csdn.net/ljlchrr</p>
    </footer>
</body>
</html>
